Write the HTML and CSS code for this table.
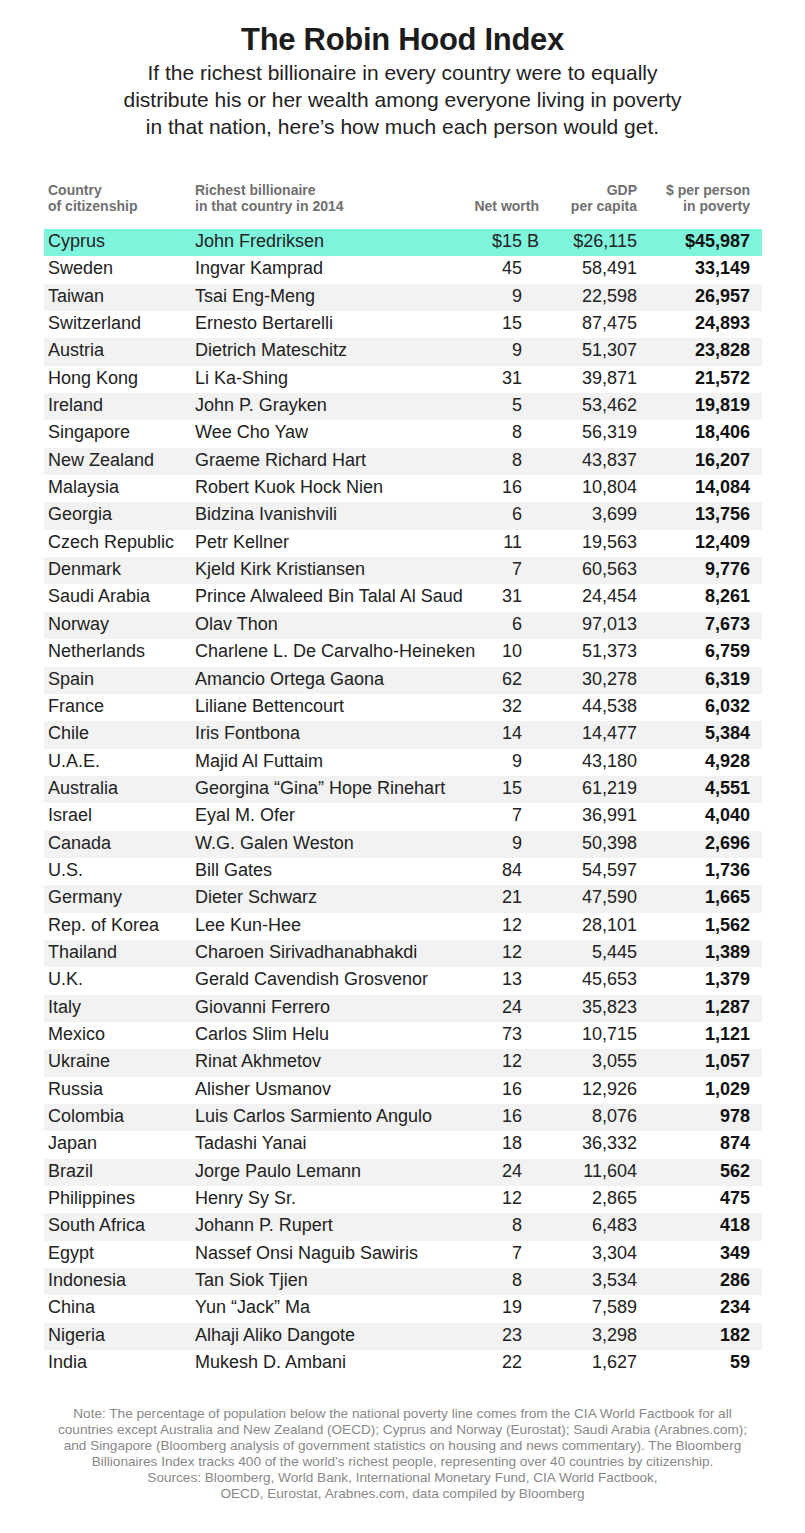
FILE: index.html
```html
<!DOCTYPE html>
<html lang="en">
<head>
<meta charset="utf-8">
<title>The Robin Hood Index</title>
<link rel="stylesheet" href="styles.css">
</head>
<body>
<main class="page">
  <h1 class="title">The Robin Hood Index</h1>
  <p class="subtitle">If the richest billionaire in every country were to equally<br>distribute his or her wealth among everyone living in poverty<br>in that nation, here’s how much each person would get.</p>

  <section class="table">
    <div class="thead">
      <div>Country<br>of citizenship</div>
      <div>Richest billionaire<br>in that country in 2014</div>
      <div class="num">Net worth</div>
      <div class="num">GDP<br>per capita</div>
      <div class="num">$ per person<br>in poverty</div>
    </div>
    <div class="tbody">
      <div class="row hl"><div>Cyprus</div><div>John Fredriksen</div><div class="num nw full">$15 B</div><div class="num">$26,115</div><div class="num b">$45,987</div></div>
      <div class="row"><div>Sweden</div><div>Ingvar Kamprad</div><div class="num nw">45</div><div class="num">58,491</div><div class="num b">33,149</div></div>
      <div class="row"><div>Taiwan</div><div>Tsai Eng-Meng</div><div class="num nw">9</div><div class="num">22,598</div><div class="num b">26,957</div></div>
      <div class="row"><div>Switzerland</div><div>Ernesto Bertarelli</div><div class="num nw">15</div><div class="num">87,475</div><div class="num b">24,893</div></div>
      <div class="row"><div>Austria</div><div>Dietrich Mateschitz</div><div class="num nw">9</div><div class="num">51,307</div><div class="num b">23,828</div></div>
      <div class="row"><div>Hong Kong</div><div>Li Ka-Shing</div><div class="num nw">31</div><div class="num">39,871</div><div class="num b">21,572</div></div>
      <div class="row"><div>Ireland</div><div>John P. Grayken</div><div class="num nw">5</div><div class="num">53,462</div><div class="num b">19,819</div></div>
      <div class="row"><div>Singapore</div><div>Wee Cho Yaw</div><div class="num nw">8</div><div class="num">56,319</div><div class="num b">18,406</div></div>
      <div class="row"><div>New Zealand</div><div>Graeme Richard Hart</div><div class="num nw">8</div><div class="num">43,837</div><div class="num b">16,207</div></div>
      <div class="row"><div>Malaysia</div><div>Robert Kuok Hock Nien</div><div class="num nw">16</div><div class="num">10,804</div><div class="num b">14,084</div></div>
      <div class="row"><div>Georgia</div><div>Bidzina Ivanishvili</div><div class="num nw">6</div><div class="num">3,699</div><div class="num b">13,756</div></div>
      <div class="row"><div>Czech Republic</div><div>Petr Kellner</div><div class="num nw">11</div><div class="num">19,563</div><div class="num b">12,409</div></div>
      <div class="row"><div>Denmark</div><div>Kjeld Kirk Kristiansen</div><div class="num nw">7</div><div class="num">60,563</div><div class="num b">9,776</div></div>
      <div class="row"><div>Saudi Arabia</div><div>Prince Alwaleed Bin Talal Al Saud</div><div class="num nw">31</div><div class="num">24,454</div><div class="num b">8,261</div></div>
      <div class="row"><div>Norway</div><div>Olav Thon</div><div class="num nw">6</div><div class="num">97,013</div><div class="num b">7,673</div></div>
      <div class="row"><div>Netherlands</div><div>Charlene L. De Carvalho-Heineken</div><div class="num nw">10</div><div class="num">51,373</div><div class="num b">6,759</div></div>
      <div class="row"><div>Spain</div><div>Amancio Ortega Gaona</div><div class="num nw">62</div><div class="num">30,278</div><div class="num b">6,319</div></div>
      <div class="row"><div>France</div><div>Liliane Bettencourt</div><div class="num nw">32</div><div class="num">44,538</div><div class="num b">6,032</div></div>
      <div class="row"><div>Chile</div><div>Iris Fontbona</div><div class="num nw">14</div><div class="num">14,477</div><div class="num b">5,384</div></div>
      <div class="row"><div>U.A.E.</div><div>Majid Al Futtaim</div><div class="num nw">9</div><div class="num">43,180</div><div class="num b">4,928</div></div>
      <div class="row"><div>Australia</div><div>Georgina “Gina” Hope Rinehart</div><div class="num nw">15</div><div class="num">61,219</div><div class="num b">4,551</div></div>
      <div class="row"><div>Israel</div><div>Eyal M. Ofer</div><div class="num nw">7</div><div class="num">36,991</div><div class="num b">4,040</div></div>
      <div class="row"><div>Canada</div><div>W.G. Galen Weston</div><div class="num nw">9</div><div class="num">50,398</div><div class="num b">2,696</div></div>
      <div class="row"><div>U.S.</div><div>Bill Gates</div><div class="num nw">84</div><div class="num">54,597</div><div class="num b">1,736</div></div>
      <div class="row"><div>Germany</div><div>Dieter Schwarz</div><div class="num nw">21</div><div class="num">47,590</div><div class="num b">1,665</div></div>
      <div class="row"><div>Rep. of Korea</div><div>Lee Kun-Hee</div><div class="num nw">12</div><div class="num">28,101</div><div class="num b">1,562</div></div>
      <div class="row"><div>Thailand</div><div>Charoen Sirivadhanabhakdi</div><div class="num nw">12</div><div class="num">5,445</div><div class="num b">1,389</div></div>
      <div class="row"><div>U.K.</div><div>Gerald Cavendish Grosvenor</div><div class="num nw">13</div><div class="num">45,653</div><div class="num b">1,379</div></div>
      <div class="row"><div>Italy</div><div>Giovanni Ferrero</div><div class="num nw">24</div><div class="num">35,823</div><div class="num b">1,287</div></div>
      <div class="row"><div>Mexico</div><div>Carlos Slim Helu</div><div class="num nw">73</div><div class="num">10,715</div><div class="num b">1,121</div></div>
      <div class="row"><div>Ukraine</div><div>Rinat Akhmetov</div><div class="num nw">12</div><div class="num">3,055</div><div class="num b">1,057</div></div>
      <div class="row"><div>Russia</div><div>Alisher Usmanov</div><div class="num nw">16</div><div class="num">12,926</div><div class="num b">1,029</div></div>
      <div class="row"><div>Colombia</div><div>Luis Carlos Sarmiento Angulo</div><div class="num nw">16</div><div class="num">8,076</div><div class="num b">978</div></div>
      <div class="row"><div>Japan</div><div>Tadashi Yanai</div><div class="num nw">18</div><div class="num">36,332</div><div class="num b">874</div></div>
      <div class="row"><div>Brazil</div><div>Jorge Paulo Lemann</div><div class="num nw">24</div><div class="num">11,604</div><div class="num b">562</div></div>
      <div class="row"><div>Philippines</div><div>Henry Sy Sr.</div><div class="num nw">12</div><div class="num">2,865</div><div class="num b">475</div></div>
      <div class="row"><div>South Africa</div><div>Johann P. Rupert</div><div class="num nw">8</div><div class="num">6,483</div><div class="num b">418</div></div>
      <div class="row"><div>Egypt</div><div>Nassef Onsi Naguib Sawiris</div><div class="num nw">7</div><div class="num">3,304</div><div class="num b">349</div></div>
      <div class="row"><div>Indonesia</div><div>Tan Siok Tjien</div><div class="num nw">8</div><div class="num">3,534</div><div class="num b">286</div></div>
      <div class="row"><div>China</div><div>Yun “Jack” Ma</div><div class="num nw">19</div><div class="num">7,589</div><div class="num b">234</div></div>
      <div class="row"><div>Nigeria</div><div>Alhaji Aliko Dangote</div><div class="num nw">23</div><div class="num">3,298</div><div class="num b">182</div></div>
      <div class="row"><div>India</div><div>Mukesh D. Ambani</div><div class="num nw">22</div><div class="num">1,627</div><div class="num b">59</div></div>
    </div>
  </section>

  <footer class="notes">
    <p>Note: The percentage of population below the national poverty line comes from the CIA World Factbook for all<br>countries except Australia and New Zealand (OECD); Cyprus and Norway (Eurostat); Saudi Arabia (Arabnes.com);<br>and Singapore (Bloomberg analysis of government statistics on housing and news commentary). The Bloomberg<br>Billionaires Index tracks 400 of the world’s richest people, representing over 40 countries by citizenship.</p>
    <p>Sources: Bloomberg, World Bank, International Monetary Fund, CIA World Factbook,<br>OECD, Eurostat, Arabnes.com, data compiled by Bloomberg</p>
  </footer>
</main>
</body>
</html>
```

FILE: styles.css
```css
html, body {
  margin: 0;
  padding: 0;
  background: #ffffff;
}

body {
  font-family: "Liberation Sans", Arial, sans-serif;
  color: #222222;
}

.page {
  width: 805px;
}

.title {
  margin: 22px 0 0;
  font-size: 31px;
  line-height: 36px;
  font-weight: 700;
  letter-spacing: -0.3px;
  text-align: center;
  color: #1c1c1c;
}

.subtitle {
  margin: 1px 0 0;
  font-size: 21px;
  line-height: 27px;
  text-align: center;
  color: #222222;
}

.table {
  margin: 42px 43px 0 44px;
}

.thead,
.row {
  display: grid;
  grid-template-columns: 147px minmax(0, 1fr) 70px 98px 113px;
  padding: 0 12px 0 4px;
  white-space: nowrap;
}

.thead {
  align-items: end;
  font-size: 14px;
  line-height: 16px;
  font-weight: 700;
  color: #707070;
}

.tbody {
  margin-top: 15px;
}

.row {
  height: 27.35px;
  align-items: start;
  font-size: 18px;
  line-height: 24px;
  color: #222222;
}

.row:nth-child(odd) {
  background: #f2f2f2;
}

.row.hl {
  background: #7ff4dc;
}

.num {
  text-align: right;
}

.nw {
  padding-right: 17px;
}

.nw.full {
  padding-right: 0;
}

.b {
  font-weight: 700;
  color: #111111;
}

.notes {
  margin-top: 29px;
  font-size: 13.6px;
  line-height: 16px;
  color: #888888;
  text-align: center;
}

.notes p {
  margin: 0;
  white-space: nowrap;
}
```
